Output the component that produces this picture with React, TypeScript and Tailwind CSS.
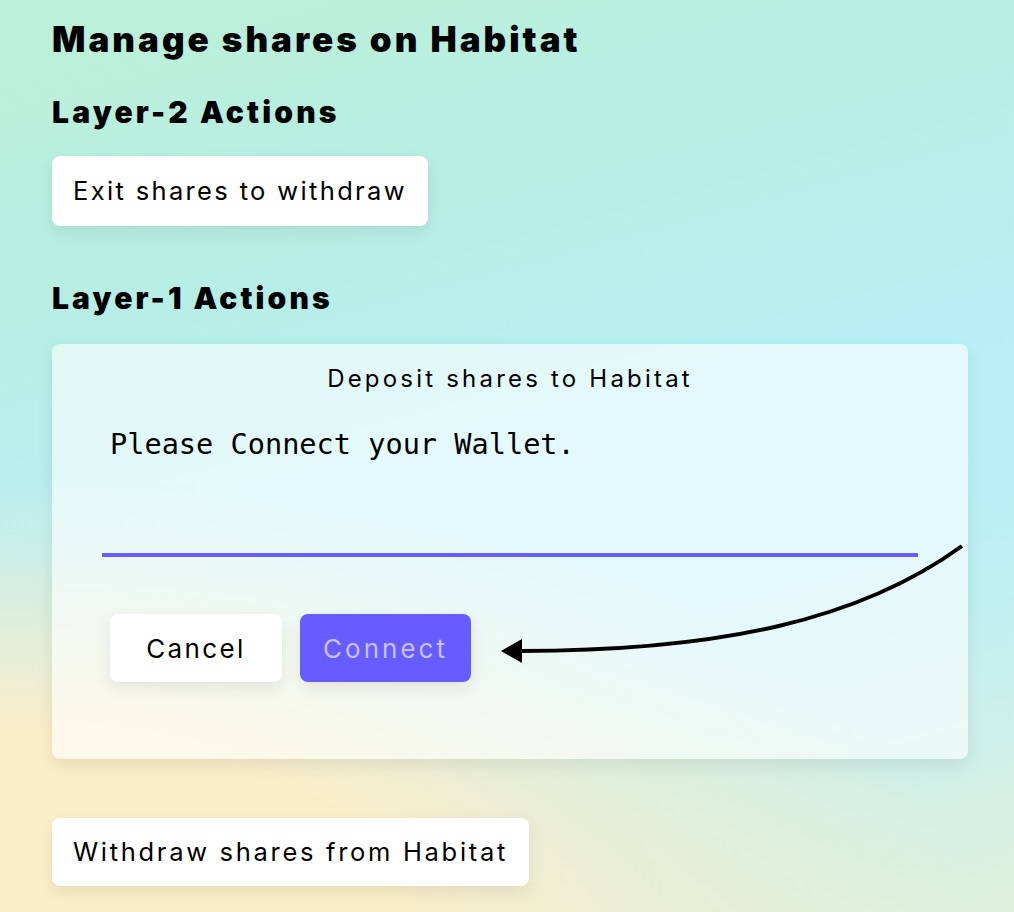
import React from 'react';

const headingFont = "font-['Inter','Lato','Liberation_Sans',sans-serif]";
const bodyFont = "font-['Inter','Open_Sans','Liberation_Sans',sans-serif]";

const WhiteButton: React.FC<{ label: string; className?: string }> = ({ label, className = '' }) => (
  <button
    className={`rounded-lg bg-white px-[21px] text-[25.5px] text-black shadow-[0_6px_16px_rgba(0,0,0,0.08)] ${bodyFont} ${className}`}
  >
    {label}
  </button>
);

const CurvedArrow: React.FC = () => (
  <svg className="pointer-events-none absolute left-0 top-0" width="1014" height="912" viewBox="0 0 1014 912" fill="none">
    <path d="M962 546 C 860 620, 720 651, 520 651" stroke="#000" strokeWidth="4" fill="none" />
    <polygon points="501,651 522,639 522,663" fill="#000" />
  </svg>
);

export default function App() {
  return (
    <div className="relative min-h-[912px] w-full overflow-hidden bg-[radial-gradient(ellipse_95%_48%_at_0%_100%,#fbedc8_0%,#fbedc8_40%,rgba(251,237,200,0)_100%),linear-gradient(165deg,#bdf0d8_0%,#b6eee2_25%,#b8eff6_50%,#bdeff4_70%,#dff0dc_100%)] pb-6 pl-[52px] pr-[46px]">
      <h1 className={`pt-[17px] text-[35px] font-black leading-[44px] tracking-[3px] text-black ${headingFont}`}>
        Manage shares on Habitat
      </h1>

      <h2 className={`mt-[31px] text-[30px] font-black leading-[40px] tracking-[3.2px] text-black ${headingFont}`}>
        Layer-2 Actions
      </h2>
      <div className="mt-[24px] flex">
        <WhiteButton label="Exit shares to withdraw" className="h-[70px] tracking-[2.35px]" />
      </div>

      <h2 className={`mt-[52px] text-[30px] font-black leading-[40px] tracking-[3.1px] text-black ${headingFont}`}>
        Layer-1 Actions
      </h2>

      <section className="mt-[26px] h-[415px] w-[916px] rounded-lg bg-white/60 px-[50px] pt-[20px] shadow-[0_6px_18px_rgba(0,0,0,0.08)]">
        <p className={`text-center text-[24px] leading-[30px] tracking-[3.2px] text-black ${bodyFont}`}>
          Deposit shares to Habitat
        </p>
        <div className="mt-[24px] h-[139px] border-b-[4px] border-[#675cff] pl-[8px] pt-[8px]">
          <p className="font-['DejaVu_Sans_Mono','Liberation_Mono',monospace] text-[28.6px] leading-[36px] text-black">
            Please Connect your Wallet.
          </p>
        </div>
        <div className="mt-[57px] flex gap-[18px] pl-[8px]">
          <button
            className={`h-[68px] w-[172px] rounded-lg bg-white text-[26px] tracking-[2.4px] text-black shadow-[0_6px_16px_rgba(0,0,0,0.08)] ${bodyFont}`}
          >
            Cancel
          </button>
          <button
            className={`h-[68px] w-[171px] rounded-lg bg-[#675cff] text-[26px] tracking-[3px] text-[#c6c2ff] shadow-[0_6px_16px_rgba(0,0,0,0.08)] ${bodyFont}`}
          >
            Connect
          </button>
        </div>
      </section>

      <div className="mt-[59px] flex">
        <WhiteButton label="Withdraw shares from Habitat" className="h-[68px] tracking-[2.7px]" />
      </div>

      <CurvedArrow />
    </div>
  );
}
